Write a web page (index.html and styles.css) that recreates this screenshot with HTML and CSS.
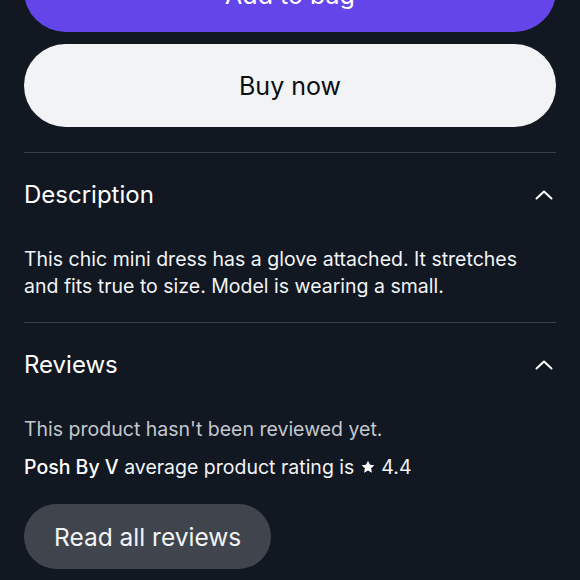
FILE: index.html
```html
<!DOCTYPE html>
<html>
<head>
<meta charset="utf-8">
<link rel="stylesheet" href="styles.css">
</head>
<body>
<div class="page">
  <div class="btn btn-primary">Add to bag</div>
  <div class="btn btn-light">Buy now</div>

  <section class="section section-desc">
    <div class="section-head">
      <h2 class="section-title">Description</h2>
      <svg class="chevron" width="18" height="10" viewBox="0 0 18 10"><path d="M1.5 8.5 L9 1.5 L16.5 8.5" fill="none" stroke="#ffffff" stroke-width="2" stroke-linecap="round" stroke-linejoin="round"/></svg>
    </div>
    <p class="desc">This chic mini dress has a glove attached. It stretches and fits true to size. Model is wearing a small.</p>
  </section>

  <section class="section section-reviews">
    <div class="section-head">
      <h2 class="section-title">Reviews</h2>
      <svg class="chevron" width="18" height="10" viewBox="0 0 18 10"><path d="M1.5 8.5 L9 1.5 L16.5 8.5" fill="none" stroke="#ffffff" stroke-width="2" stroke-linecap="round" stroke-linejoin="round"/></svg>
    </div>
    <p class="muted">This product hasn't been reviewed yet.</p>
    <p class="rating"><span class="brand">Posh By V</span> average product rating is <svg class="star" width="16" height="16" viewBox="0 0 24 24"><path d="M12 2.5l2.9 6.2 6.6.7-4.9 4.5 1.4 6.6L12 17.2l-6 3.3 1.4-6.6-4.9-4.5 6.6-.7z" fill="#ffffff"/></svg> 4.4</p>
    <div class="btn btn-grey">Read all reviews</div>
  </section>
</div>
</body>
</html>
```
FILE: styles.css
```css
html, body {
  margin: 0;
  padding: 0;
  background: #111822;
  overflow: hidden;
}
body {
  font-family: Inter, "Liberation Sans", sans-serif;
  color: #f2f3f5;
}
.page {
  padding: 0 24px;
  display: flex;
  flex-direction: column;
}
.btn {
  display: flex;
  align-items: center;
  justify-content: center;
  border-radius: 42px;
  font-size: 25px;
  font-weight: 400;
  box-sizing: border-box;
}
.btn-primary {
  height: 83px;
  margin-top: -51px;
  padding-top: 9px;
  background: #6445ea;
  color: #ffffff;
}
.btn-light {
  height: 83px;
  margin-top: 12px;
  background: #f2f3f5;
  color: #0b0e13;
}
.section {
  border-top: 1px solid #3a404b;
}
.section-desc {
  margin-top: 25px;
}
.section-reviews {
  margin-top: 22px;
}
.section-head {
  display: flex;
  align-items: center;
  justify-content: space-between;
  height: 83px;
}
.section-title {
  margin: 0;
  font-size: 24px;
  font-weight: 400;
  color: #ffffff;
}
.chevron {
  margin-right: 3px;
}
.desc {
  margin: 10px 0 0;
  font-size: 19.5px;
  line-height: 27px;
  color: #f2f3f5;
}
.muted {
  margin: 10px 0 0;
  font-size: 19.5px;
  line-height: 27px;
  color: #c4c7cc;
}
.rating {
  margin: 11px 0 0;
  font-size: 19.5px;
  line-height: 27px;
  color: #f2f3f5;
}
.brand {
  color: #ffffff;
  font-weight: 500;
}
.star {
  vertical-align: -1px;
}
.btn-grey {
  display: inline-flex;
  width: fit-content;
  height: 65px;
  margin-top: 23px;
  padding: 0 30px;
  background: #40454d;
  color: #f2f3f5;
  border-radius: 33px;
  font-size: 24.5px;
}
```
